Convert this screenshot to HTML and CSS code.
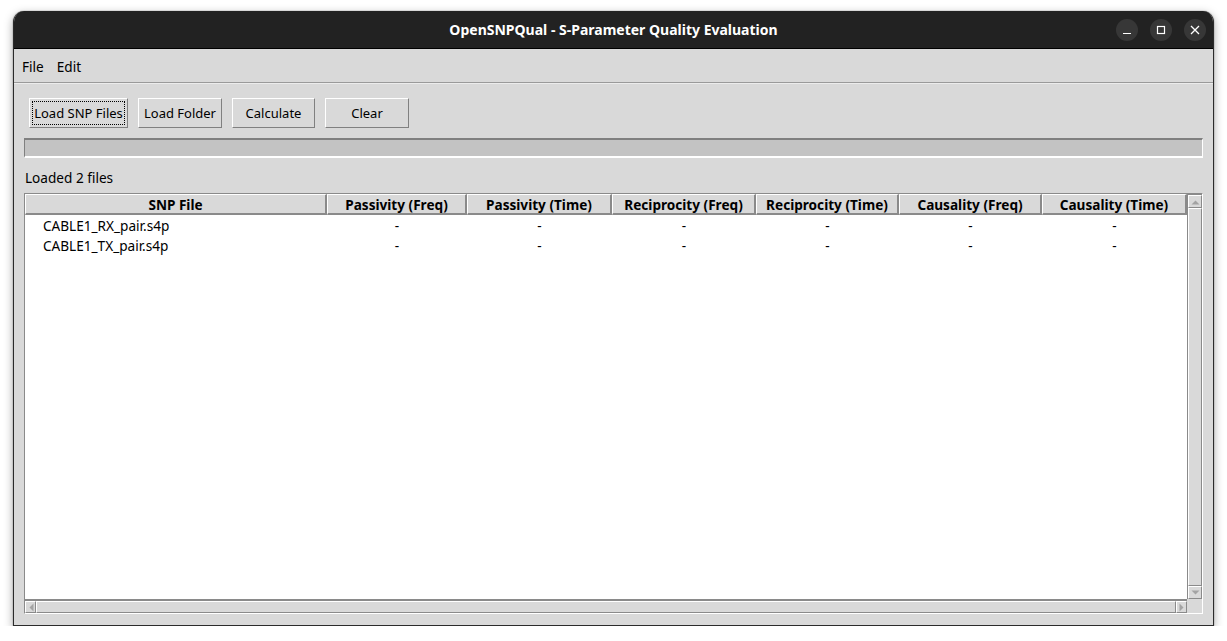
FILE: index.html
```html
<!DOCTYPE html>
<html>
<head>
<meta charset="utf-8">
<link rel="stylesheet" href="styles.css">
</head>
<body>
<div class="window">
  <div class="titlebar">
    <div class="title">OpenSNPQual - S-Parameter Quality Evaluation</div>
    <div class="winbtns">
      <span class="wbtn"><svg width="12" height="12" viewBox="0 0 12 12"><path d="M2 9.5h8" stroke="#fff" stroke-width="1.2"/></svg></span>
      <span class="wbtn"><svg width="12" height="12" viewBox="0 0 12 12"><rect x="2.5" y="2.5" width="7" height="7" fill="none" stroke="#fff" stroke-width="1.2"/></svg></span>
      <span class="wbtn"><svg width="12" height="12" viewBox="0 0 12 12"><path d="M2 2l8 8M10 2l-8 8" stroke="#fff" stroke-width="1.3"/></svg></span>
    </div>
  </div>
  <div class="menubar">
    <span class="menu">File</span>
    <span class="menu">Edit</span>
  </div>
  <div class="main">
    <div class="toolbar">
      <button class="btn focus"><span>Load SNP Files</span></button>
      <button class="btn btn-folder"><span>Load Folder</span></button>
      <button class="btn btn-calc"><span>Calculate</span></button>
      <button class="btn btn-clear"><span>Clear</span></button>
    </div>
    <div class="progress"></div>
    <div class="status">Loaded 2 files</div>
    <div class="tree">
      <div class="tree-view">
        <div class="row head">
          <div class="c c1">SNP File</div>
          <div class="c c2">Passivity (Freq)</div>
          <div class="c c3">Passivity (Time)</div>
          <div class="c c4">Reciprocity (Freq)</div>
          <div class="c c5">Reciprocity (Time)</div>
          <div class="c c6">Causality (Freq)</div>
          <div class="c c7">Causality (Time)</div>
        </div>
        <div class="row data">
          <div class="c c1 name">CABLE1_RX_pair.s4p</div>
          <div class="c c2">-</div>
          <div class="c c3">-</div>
          <div class="c c4">-</div>
          <div class="c c5">-</div>
          <div class="c c6">-</div>
          <div class="c c7">-</div>
        </div>
        <div class="row data">
          <div class="c c1 name">CABLE1_TX_pair.s4p</div>
          <div class="c c2">-</div>
          <div class="c c3">-</div>
          <div class="c c4">-</div>
          <div class="c c5">-</div>
          <div class="c c6">-</div>
          <div class="c c7">-</div>
        </div>
      </div>
      <div class="vscroll">
        <div class="arrow"><svg width="9" height="6" viewBox="0 0 9 6"><path d="M0.5 5.5L4.5 1.5L8.5 5.5Z" fill="#a3a3a3"/></svg></div>
        <div class="trough"></div>
        <div class="arrow"><svg width="9" height="6" viewBox="0 0 9 6"><path d="M0.5 0.5L4.5 4.5L8.5 0.5Z" fill="#a3a3a3"/></svg></div>
      </div>
      <div class="hscroll">
        <div class="arrow"><svg width="6" height="9" viewBox="0 0 6 9"><path d="M5.5 0.5L1.5 4.5L5.5 8.5Z" fill="#a3a3a3"/></svg></div>
        <div class="trough"></div>
        <div class="arrow"><svg width="6" height="9" viewBox="0 0 6 9"><path d="M0.5 0.5L4.5 4.5L0.5 8.5Z" fill="#a3a3a3"/></svg></div>
      </div>
      <div class="corner"></div>
    </div>
  </div>
</div>
</body>
</html>
```
FILE: styles.css
```css
* { box-sizing: border-box; }
html, body { margin: 0; padding: 0; background: #ffffff; }
body {
  padding: 11px 0 0 13px;
  font-family: "Noto Sans", "DejaVu Sans", sans-serif;
  font-size: 13.6px;
  color: #000;
}
.window {
  width: 1201px;
  height: 615px;
  border-radius: 11px 11px 0 0;
  background: #d9d9d9;
  box-shadow: 0 3px 10px rgba(0,0,0,0.35), 0 0 0 1px rgba(0,0,0,0.08);
  display: flex;
  flex-direction: column;
  overflow: hidden;
  border-left: 1px solid #2b2b2b;
  border-right: 1px solid #2b2b2b;
  border-bottom: 1px solid #2b2b2b;
}
.titlebar {
  height: 38px;
  flex: none;
  background: #222222;
  border-bottom: 1px solid #000;
  display: flex;
  align-items: center;
  justify-content: center;
  position: relative;
}
.title {
  color: #ffffff;
  font-weight: bold;
  font-size: 14px;
}
.winbtns {
  position: absolute;
  right: 7px;
  top: 8px;
  display: flex;
  gap: 12px;
}
.wbtn {
  width: 22px;
  height: 22px;
  border-radius: 50%;
  background: #373737;
  display: flex;
  align-items: center;
  justify-content: center;
}
.menubar {
  height: 34px;
  flex: none;
  display: flex;
  align-items: center;
  padding: 1px 0 0 8px;
  border-bottom: 1px solid #9a9a9a;
  box-shadow: 0 1px 0 #ececec;
}
.menu:first-child { padding-right: 13px; }
.main {
  flex: 1;
  display: flex;
  flex-direction: column;
  padding: 15px 10px 11px 10px;
}
.toolbar {
  display: flex;
  gap: 10px;
  padding-left: 5px;
  height: 30px;
}
.btn {
  font-family: inherit;
  font-size: 13px;
  color: #000;
  background: #d9d9d9;
  border: 1px solid;
  border-color: #ffffff #808080 #808080 #ffffff;
  padding: 2px;
  height: 30px;
  margin: 0;
  display: flex;
  align-items: stretch;
  flex: none;
  white-space: nowrap;
}
.btn span {
  display: flex;
  align-items: center;
  justify-content: center;
  padding: 0;
  border: 1px dotted transparent;
  width: 100%;
  white-space: nowrap;
}
.btn.focus span { border-color: #000; }
.btn.focus { width: 99px; }
.btn-folder { width: 84px; }
.btn-calc { width: 83px; }
.btn-clear { width: 84px; }
.progress {
  margin-top: 10px;
  height: 20px;
  background: #c3c3c3;
  border: 1px solid;
  border-color: #808080 #ffffff #ffffff #808080;
  border-width: 2px 1px 2px 1px;
}
.status {
  margin-top: 11px;
  height: 19px;
  line-height: 17px;
  padding-left: 1px;
}
.tree {
  margin-top: 5px;
  flex: 1;
  display: grid;
  grid-template-columns: 1fr 15px;
  grid-template-rows: 1fr 14px;
  border: 1px solid;
  border-color: #8a8a8a #ffffff #ffffff #8a8a8a;
  background: #d9d9d9;
}
.tree-view {
  background: #ffffff;
  overflow: hidden;
}
.row { display: flex; }
.head { height: 21px; background: #d9d9d9; }
.head .c {
  font-weight: bold;
  text-align: center;
  border: 1px solid;
  border-color: #ffffff #8a8a8a #8a8a8a #ffffff;
  border-width: 1px 2px 2px 1px;
  padding-top: 1px;
  line-height: 18px;
}
.data { height: 20px; }
.data .c { text-align: center; line-height: 19px; padding-top: 1px; }
.data .name { text-align: left; padding-left: 18px; }
.c { flex: none; white-space: nowrap; overflow: hidden; }
.c1 { width: 302px; }
.c2 { width: 140px; }
.c3 { width: 145px; }
.c4 { width: 144px; }
.c5 { width: 143px; }
.c6 { width: 143px; }
.c7 { width: 145px; }
.vscroll {
  display: flex;
  flex-direction: column;
  border-left: 1px solid #8a8a8a;
  border-top: 1px solid #8a8a8a;
  background: #d9d9d9;
}
.vscroll .arrow {
  height: 13px;
  display: flex;
  align-items: center;
  justify-content: center;
  border: 1px solid;
  border-color: #ffffff #8a8a8a #8a8a8a #ffffff;
}
.vscroll .trough {
  flex: 1;
  border: 1px solid;
  border-color: #ffffff #8a8a8a #8a8a8a #ffffff;
}
.hscroll {
  display: flex;
  border-top: 2px solid #8a8a8a;
  background: #d9d9d9;
}
.hscroll .arrow {
  width: 11px;
  display: flex;
  align-items: center;
  justify-content: center;
  border: 1px solid;
  border-color: #ffffff #8a8a8a #8a8a8a #ffffff;
}
.hscroll .trough {
  flex: 1;
  border: 1px solid;
  border-color: #ffffff #8a8a8a #8a8a8a #ffffff;
}
.corner { background: #d9d9d9; }
```
